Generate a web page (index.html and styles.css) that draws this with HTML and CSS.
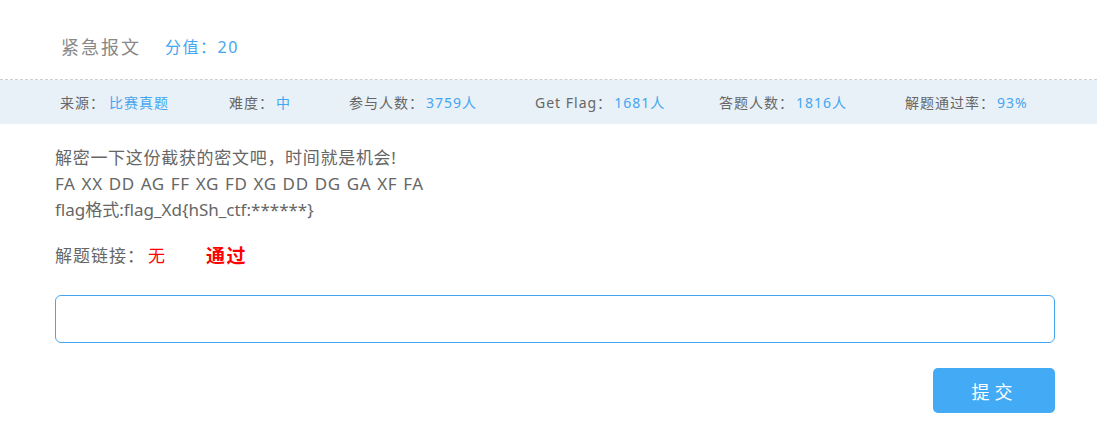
FILE: index.html
```html
<!DOCTYPE html>
<html lang="zh">
<head>
<meta charset="utf-8">
<link rel="stylesheet" href="styles.css">
</head>
<body>
<div class="page">
  <header class="head">
    <span class="title">紧急报文</span>
    <span class="score">分值：20</span>
  </header>
  <div class="stats">
    <span class="stat">来源：<em>比赛真题</em></span>
    <span class="stat">难度：<em>中</em></span>
    <span class="stat">参与人数：<em>3759人</em></span>
    <span class="stat">Get Flag：<em>1681人</em></span>
    <span class="stat">答题人数：<em>1816人</em></span>
    <span class="stat">解题通过率：<em>93%</em></span>
  </div>
  <main class="body">
    <div class="desc">
      <p class="cn">解密一下这份截获的密文吧，时间就是机会!</p>
      <p class="code">FA XX DD AG FF XG FD XG DD DG GA XF FA</p>
      <p>flag格式:flag_Xd{hSh_ctf:******}</p>
    </div>
    <div class="link">
      <span>解题链接：</span>
      <span class="none">无</span>
      <span class="pass">通过</span>
    </div>
    <input class="answer" type="text">
    <div class="actions">
      <button class="submit">提交</button>
    </div>
  </main>
</div>
</body>
</html>
```

FILE: styles.css
```css
* { box-sizing: border-box; }
html, body { margin: 0; padding: 0; background: #fff; }
body {
  font-family: "Noto Sans", "Noto Sans CJK SC", sans-serif;
  color: #666;
}
.head {
  height: 80px;
  padding: 12px 0 0 61px;
  display: flex;
  align-items: center;
  gap: 24px;
  border-bottom: 1px dashed #cfcfcf;
}
.title { font-size: 18px; letter-spacing: 2px; color: #888; }
.score { font-size: 16px; letter-spacing: 1.5px; color: #44a6f0; }
.stats {
  height: 44px;
  background: #e9f1f8;
  display: grid;
  grid-template-columns: 169px 120px 186px 184px 186px auto;
  align-items: center;
  padding-left: 60px;
  font-size: 14px;
  letter-spacing: 1px;
  color: #666;
  white-space: nowrap;
}
.stat em { font-style: normal; color: #44a6f0; margin-left: 2px; }
.stat:first-child em { margin-left: 4px; }
.body { padding: 21px 0 0 55px; width: 1055px; }
.desc p { margin: 0; font-size: 17px; line-height: 26px; color: #666; }
.desc p.cn { letter-spacing: 0.7px; }
.desc p.code { letter-spacing: 0.6px; word-spacing: 1px; }
.link {
  margin-top: 20px;
  display: flex;
  align-items: center;
  font-size: 17px;
  letter-spacing: 1px;
  line-height: 26px;
}
.none { color: #f00; margin-left: 3px; }
.pass { color: #f00; font-weight: bold; font-size: 19px; letter-spacing: 1.5px; margin-left: 40px; }
.answer {
  display: block;
  width: 1000px;
  height: 48px;
  margin-top: 26px;
  border: 1px solid #44a6f0;
  border-radius: 6px;
  outline: none;
  font-size: 16px;
  padding: 0 12px;
}
.actions { display: flex; justify-content: flex-end; margin-top: 25px; }
.submit {
  width: 122px;
  height: 45px;
  background: #43aaf6;
  color: #fff;
  border: none;
  border-radius: 5px;
  font-family: "Noto Sans CJK SC", sans-serif;
  font-size: 18px;
  letter-spacing: 5px;
  padding-left: 7px;
}
```
